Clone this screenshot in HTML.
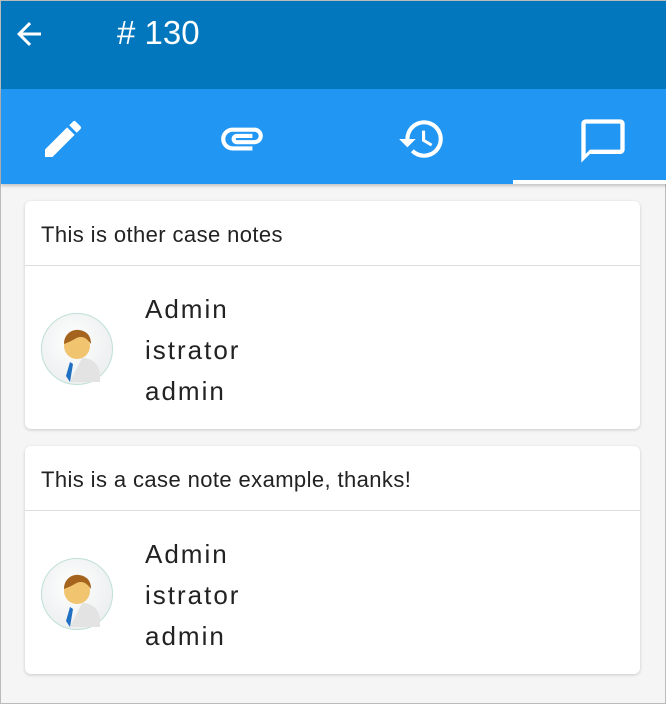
<!DOCTYPE html>
<html><head><style>
*{margin:0;padding:0;box-sizing:border-box}
body{width:666px;height:704px;background:#f5f5f5;font-family:"Liberation Sans",Roboto,sans-serif;position:relative;overflow:hidden;border:1px solid #bbb}
.hdr{position:absolute;left:0;top:0;width:666px;height:88px;background:#0277bd}
.title{position:absolute;left:116px;top:12px;color:#fff;font-size:33px;line-height:40px}
.tabs{position:absolute;left:0;top:88px;width:666px;height:95px;background:#2196f3;box-shadow:0 2px 3px rgba(0,0,0,.2)}
.ind{position:absolute;left:512px;top:179px;width:154px;height:4px;background:#fff}
.icon{position:absolute}
.card{position:absolute;left:24px;width:615px;height:228px;background:#fff;border-radius:6px;box-shadow:0 1px 3px rgba(0,0,0,.18)}
.note{height:65px;border-bottom:1px solid #ddd;padding-left:16px;font-size:22px;letter-spacing:0.4px;line-height:68px;color:#222}
.av{position:absolute;left:16px;top:112px;width:72px;height:72px;border-radius:50%;border:1px solid #bfe0d6;background:radial-gradient(circle at 45% 40%,#fff,#e6e9ea)}
.names{position:absolute;left:120px;top:88px;font-size:26px;line-height:41px;color:#222;letter-spacing:2px}
</style></head><body>
<div class="hdr">
<svg class="icon" style="left:10px;top:15px" width="36" height="36" viewBox="0 0 24 24"><path fill="#fff" d="M20 11H7.83l5.59-5.59L12 4l-8 8 8 8 1.41-1.41L7.83 13H20v-2z"/></svg>
<div class="title"># 130</div>
</div>
<div class="tabs">
<svg class="icon" style="left:38px;top:26px" width="48" height="48" viewBox="0 0 24 24"><path fill="#fff" d="M3 17.25V21h3.75L17.81 9.94l-3.75-3.75L3 17.25zM20.71 7.04a1 1 0 000-1.41l-2.34-2.34a1 1 0 00-1.41 0l-1.83 1.83 3.75 3.75 1.83-1.83z"/></svg>
<svg class="icon" style="left:216px;top:24px" width="50" height="50" viewBox="0 0 24 24"><path fill="#fff" d="M2 12.5C2 9.46 4.46 7 7.5 7H18c2.21 0 4 1.79 4 4s-1.79 4-4 4H9.5C8.12 15 7 13.880 7 12.5S8.12 10 9.5 10H17v2H9.41c-.55 0-.55 1 0 1H18c1.1 0 2-.9 2-2s-.9-2-2-2H7.5C5.57 9 4 10.57 4 12.5S5.57 16 7.5 16H17v2H7.5C4.46 18 2 15.54 2 12.5z"/></svg>
<svg class="icon" style="left:396px;top:25px" width="50" height="50" viewBox="0 0 24 24"><path fill="#fff" d="M13 3a9 9 0 00-9 9H1l3.89 3.89.07.14L9 12H6c0-3.87 3.13-7 7-7s7 3.13 7 7-3.13 7-7 7c-1.930 0-3.68-.79-4.94-2.06l-1.42 1.42A8.954 8.954 0 0013 21a9 9 0 000-18zm-1 5v5l4.28 2.54.72-1.21-3.5-2.08V8H12z"/></svg>
<svg class="icon" style="left:576px;top:26px" width="52" height="52" viewBox="0 0 24 24"><path fill="#fff" d="M20 2H4c-1.1 0-2 .9-2 2v18l4-4h14c1.1 0 2-.9 2-2V4c0-1.1-.9-2-2-2zm0 14H6l-2 2V4h16v12z"/></svg>
</div>
<div class="ind"></div>

<div class="card" style="top:200px">
<div class="note">This is other case notes</div>
<div class="av"><svg width="72" height="72" viewBox="0 0 72 72"><path d="M40 44c10 0 18 6 18 18v6H28z" fill="#e3e3e3"/><path d="M28 48l-4 14 4 6 3-18z" fill="#1f6fc2"/><circle cx="35" cy="32" r="13" fill="#f1c470"/><path d="M22 30c0-10 8-15 15-14 8 1 12 6 12 14-3-4-6-7-10-7-5 0-6 3-17 7z" fill="#a5641e"/></svg></div>
<div class="names">Admin<br>istrator<br>admin</div>
</div>
<div class="card" style="top:445px">
<div class="note">This is a case note example, thanks!</div>
<div class="av"><svg width="72" height="72" viewBox="0 0 72 72"><path d="M40 44c10 0 18 6 18 18v6H28z" fill="#e3e3e3"/><path d="M28 48l-4 14 4 6 3-18z" fill="#1f6fc2"/><circle cx="35" cy="32" r="13" fill="#f1c470"/><path d="M22 30c0-10 8-15 15-14 8 1 12 6 12 14-3-4-6-7-10-7-5 0-6 3-17 7z" fill="#a5641e"/></svg></div>
<div class="names">Admin<br>istrator<br>admin</div>
</div>
</body></html>
